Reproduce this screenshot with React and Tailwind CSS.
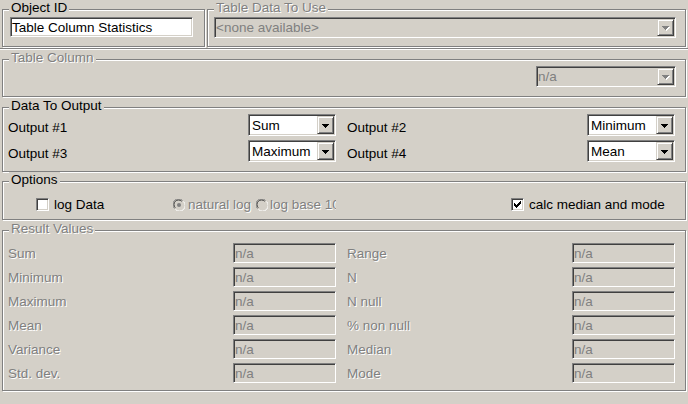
import React from 'react';

// Classic Win32 look: Table Column Statistics property panel
const disabledLabel = 'text-[#808080] [text-shadow:1px_1px_0_#fff]';
const sunken =
  'border border-t-[#808080] border-l-[#808080] border-b-white border-r-white shadow-[inset_1px_1px_0_#404040,inset_-1px_-1px_0_#d4d0c8]';
const raised =
  'border border-t-[#d4d0c8] border-l-[#d4d0c8] border-b-[#404040] border-r-[#404040] shadow-[inset_1px_1px_0_#fff,inset_-1px_-1px_0_#808080] bg-[#d4d0c8]';

const Group = ({ title, disabled, className = '', children }) => (
  <div className={`relative border border-[#808080] shadow-[inset_1px_1px_0_#fff,1px_1px_0_#fff] ${className}`}>
    <span
      className={`absolute left-[6px] top-[-10px] bg-[#d4d0c8] px-[2px] leading-[15px] whitespace-nowrap ${
        disabled ? disabledLabel : 'text-black'
      }`}
    >
      {title}
    </span>
    {children}
  </div>
);

const TextBox = ({ value, disabled, className = '' }) => (
  <div
    className={`${sunken} flex items-center h-[20px] pl-[1px] overflow-hidden whitespace-nowrap ${
      disabled ? 'bg-[#d4d0c8] text-[#808080]' : 'bg-white text-black'
    } ${className}`}
  >
    {value}
  </div>
);

const Arrow = ({ disabled }) =>
  disabled ? (
    <svg width="8" height="5" viewBox="0 0 8 5" shapeRendering="crispEdges">
      <path d="M1 1h7v1H1zM2 2h5v1H2zM3 3h3v1H3zM4 4h1v1H4z" fill="#fff" />
      <path d="M0 0h7v1H0zM1 1h5v1H1zM2 2h3v1H2zM3 3h1v1H3z" fill="#808080" />
    </svg>
  ) : (
    <svg width="7" height="4" viewBox="0 0 7 4" shapeRendering="crispEdges">
      <path d="M0 0h7v1H0zM1 1h5v1H1zM2 2h3v1H2zM3 3h1v1H3z" fill="#000" />
    </svg>
  );

const Combo = ({ value, disabled, className = '' }) => (
  <div
    className={`${sunken} flex items-stretch p-[1px] ${
      disabled ? 'bg-[#d4d0c8] text-[#808080]' : 'bg-white text-black'
    } ${className}`}
  >
    <div className={`flex-1 flex items-center overflow-hidden whitespace-nowrap ${disabled ? 'pl-0' : 'pl-[2px]'}`}>
      {value}
    </div>
    <div className={`${raised} w-[17px] flex items-center justify-center pt-[1px]`}>
      <Arrow disabled={disabled} />
    </div>
  </div>
);

const CheckBox = ({ checked }) => (
  <div className={`${sunken} w-[13px] h-[13px] bg-white flex items-center justify-center shrink-0`}>
    {checked && (
      <svg width="7" height="7" viewBox="0 0 7 7" shapeRendering="crispEdges">
        <path
          d="M6 0h1v1H6zM5 1h2v1H5zM0 2h1v1H0zM4 2h3v1H4zM0 3h2v1H0zM3 3h3v1H3zM0 4h5v1H0zM1 5h3v1H1zM2 6h1v1H2z"
          fill="#000"
        />
      </svg>
    )}
  </div>
);

const Radio = ({ checked }) => (
  <svg width="12" height="12" viewBox="0 0 12 12" className="shrink-0">
    <circle cx="6" cy="6" r="5" fill="#d4d0c8" />
    <path d="M1.5 9.5A5.5 5.5 0 0 1 9.5 1.5" fill="none" stroke="#808080" strokeWidth="1" />
    <path d="M2.3 8.7A4.5 4.5 0 0 1 8.7 2.3" fill="none" stroke="#404040" strokeWidth="1" />
    <path d="M10.5 2.5A5.5 5.5 0 0 1 2.5 10.5" fill="none" stroke="#fff" strokeWidth="1" />
    {checked && <circle cx="6" cy="6" r="2" fill="#808080" />}
  </svg>
);

const outputs = [
  ['Output #1', 'Sum', 'Output #2', 'Minimum'],
  ['Output #3', 'Maximum', 'Output #4', 'Mean'],
];

const results = [
  ['Sum', 'Range'],
  ['Minimum', 'N'],
  ['Maximum', 'N null'],
  ['Mean', '% non null'],
  ['Variance', 'Median'],
  ['Std. dev.', 'Mode'],
];

export default function App() {
  return (
    <div className="w-[688px] h-[404px] overflow-hidden bg-[#d4d0c8] text-[13.5px] leading-[15px] text-black font-['Liberation_Sans',Arial,sans-serif]">
      {/* top row */}
      <div className="flex pt-[9px] pl-[2px]">
        <Group title="Object ID" className="w-[203px] h-[38px]">
          <div className="pt-[7px] pl-[7px]">
            <TextBox value="Table Column Statistics" className="w-[183px]" />
          </div>
        </Group>
        <Group title="Table Data To Use" disabled className="ml-[2px] w-[479px] h-[38px]">
          <div className="pt-[7px] pl-[6px]">
            <Combo value="<none available>" disabled className="w-[462px] h-[21px]" />
          </div>
        </Group>
      </div>

      <div className="mt-[1px] h-[2px] border-t border-t-[#808080] border-b border-b-white" />

      <div className="pl-[2px]">
        <Group title="Table Column" disabled className="mt-[9px] w-[684px] h-[38px]">
          <div className="flex justify-end pt-[6px] pr-[9px]">
            <Combo value="n/a" disabled className="w-[140px] h-[21px]" />
          </div>
        </Group>

        <Group title="Data To Output" className="mt-[10px] w-[684px] h-[65px]">
          <div className="flex flex-col gap-[4px] pt-[6px] pl-[5px]">
            {outputs.map(([l1, v1, l2, v2]) => (
              <div key={l1} className="grid grid-cols-[328px_328px] gap-x-[11px]">
                <div className="flex items-center justify-between">
                  <span className="pt-[4px]">{l1}</span>
                  <Combo value={v1} className="w-[88px] h-[22px]" />
                </div>
                <div className="flex items-center justify-between">
                  <span className="pt-[4px]">{l2}</span>
                  <Combo value={v2} className="w-[88px] h-[22px]" />
                </div>
              </div>
            ))}
          </div>
        </Group>

        <Group title="Options" className="mt-[9px] w-[684px] h-[39px]">
          <div className="flex items-center pt-[15px] pl-[33px]">
            <div className="flex items-center w-[137px]">
              <CheckBox />
              <span className="ml-[5px]">log Data</span>
            </div>
            <div className="flex items-center w-[83px]">
              <Radio checked />
              <span className={`ml-[3px] ${disabledLabel}`}>natural log</span>
            </div>
            {/* the radio label is clipped by its control width, as in the original dialog */}
            <div className="flex items-center w-[80px] overflow-hidden whitespace-nowrap">
              <Radio />
              <span className={`ml-[2px] ${disabledLabel}`}>log base 10</span>
            </div>
            <div className="flex items-center ml-[175px]">
              <CheckBox checked />
              <span className="ml-[5px]">calc median and mode</span>
            </div>
          </div>
        </Group>

        <Group title="Result Values" disabled className="mt-[10px] w-[684px] h-[161px]">
          <div className="flex flex-col gap-[4px] pt-[12px] pl-[5px]">
            {results.map(([a, b]) => (
              <div key={a} className="grid grid-cols-[328px_328px] gap-x-[11px]">
                <div className="flex items-center justify-between">
                  <span className={disabledLabel}>{a}</span>
                  <TextBox value="n/a" disabled className="w-[103px]" />
                </div>
                <div className="flex items-center justify-between">
                  <span className={disabledLabel}>{b}</span>
                  <TextBox value="n/a" disabled className="w-[103px]" />
                </div>
              </div>
            ))}
          </div>
        </Group>
      </div>
    </div>
  );
}
